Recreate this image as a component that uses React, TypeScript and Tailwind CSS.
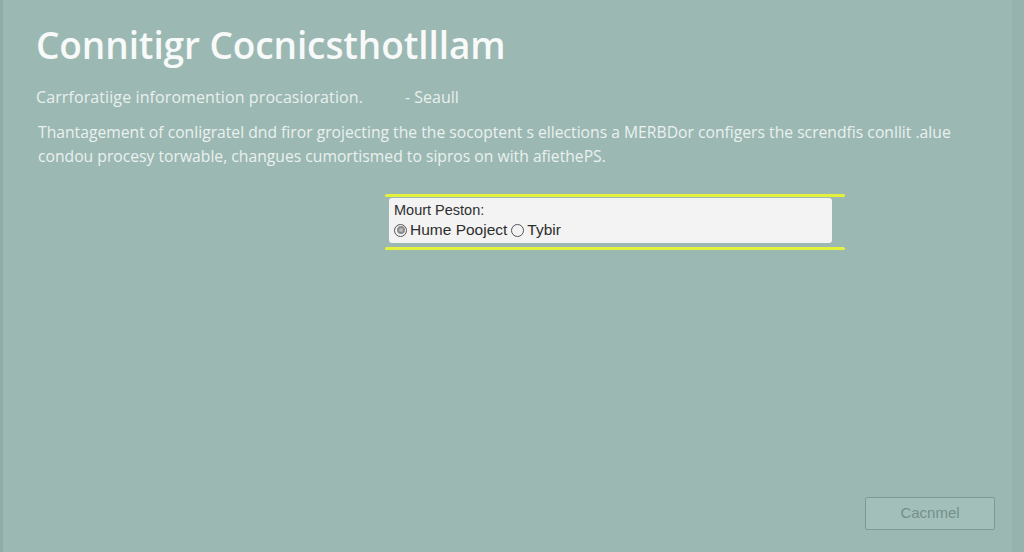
import { useState } from "react";

const options = ["Hume Pooject", "Tybir"];

function RadioDot({ checked }: { checked: boolean }) {
  return (
    <span className="inline-flex h-[13px] w-[13px] items-center justify-center rounded-full border border-[#555]">
      {checked && <span className="h-[8px] w-[8px] rounded-full border-2 border-[#8a8a8a] bg-[#bbb]" />}
    </span>
  );
}

export default function App() {
  const [selected, setSelected] = useState(0);

  return (
    <div
      className="flex h-[552px] w-[1024px] flex-col overflow-hidden bg-[#9cb8b3] text-white"
      style={{ fontFamily: '"Open Sans", "Noto Sans", sans-serif' }}
    >
      <div className="flex flex-1 flex-col border-l-[3px] border-r-[12px] border-l-[#90aca7] border-r-[#97b3ae] pl-[33px] pr-[30px]">
        <h1 className="mt-[20px] text-[37px] font-semibold leading-[50px] tracking-[-0.1px] text-[#f7faf9]">
          Connitigr Cocnicsthotlllam
        </h1>
        <div className="mt-[16px] flex text-[16px] leading-[22px] text-[#e8f0ee]">
          <span className="tracking-[0.1px]">Carrforatiige inforomention procasioration.</span>
          <span className="ml-[42px]">- Seaull</span>
        </div>
        <p className="mt-[12px] pl-[2px] text-[15.7px] leading-[24px] text-[#eaf1ef]">
          Thantagement of conligratel dnd firor grojecting the the socoptent s ellections a MERBDor configers the screndfis conllit .alue
          <br />
          condou procesy torwable, changues cumortismed to sipros on with afiethePS.
        </p>

        <div className="mt-[26px] ml-[349px] flex w-[460px] flex-col">
          <div className="h-[3px] rounded-full bg-[#e3f03c]" />
          <div
            className="mx-[4px] mr-[13px] mt-[1px] rounded-[3px] bg-[#f2f3f2] px-[5px] pt-[2px] pb-[3px] text-[#2e2e2e]"
            style={{ fontFamily: '"Liberation Sans", Arial, sans-serif' }}
          >
            <div className="text-[14.5px] leading-[20px]">Mourt Peston:</div>
            <div className="flex items-center gap-[4px] text-[15.5px] leading-[20px]">
              {options.map((opt, i) => (
                <label
                  key={opt}
                  className="flex cursor-pointer items-center gap-[3px]"
                  onClick={() => setSelected(i)}
                >
                  <RadioDot checked={selected === i} />
                  <span>{opt}</span>
                </label>
              ))}
            </div>
          </div>
          <div className="mt-[4px] h-[3px] rounded-full bg-[#e3f03c]" />
        </div>

        <div className="mt-auto mb-[22px] flex justify-end">
          <button
            className="mr-[-13px] h-[33px] w-[130px] rounded-[2px] border border-[#7e9a95] bg-[#a2bfba] text-[15px] text-[#768f8b]"
            style={{ fontFamily: '"Liberation Sans", Arial, sans-serif' }}
          >
            Cacnmel
          </button>
        </div>
      </div>
    </div>
  );
}
